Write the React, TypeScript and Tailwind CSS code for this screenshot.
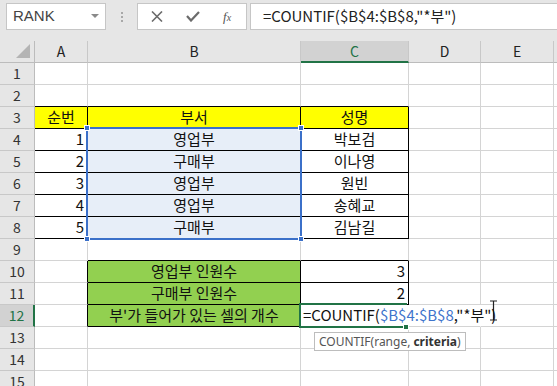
import React from "react";

type Cell = {
  t?: React.ReactNode;
  align?: "l" | "c" | "r";
  bg?: string;
  br?: boolean;
  bb?: boolean;
  noR?: boolean;
};

const colW = ["w-[53px]", "w-[213px]", "w-[108px]", "w-[72px]", "w-[73px]", "w-[40px]"];
const colNames = ["A", "B", "C", "D", "E", ""];

const font = "font-['Noto_Sans_CJK_KR',sans-serif]";

// rows 1..15, each has cells A..F
function buildRows(): Cell[][] {
  const rows: Cell[][] = [];
  for (let i = 0; i < 15; i++) rows.push([{}, {}, {}, {}, {}, {}]);
  // row 2 bottom line
  for (let c = 0; c < 3; c++) rows[1][c] = { bb: true };
  rows[2] = [
    { t: "순번", align: "c", bg: "bg-[#ffff00]", br: true, bb: true },
    { t: "부서", align: "c", bg: "bg-[#ffff00]", br: true, bb: true },
    { t: "성명", align: "c", bg: "bg-[#ffff00]", br: true, bb: true },
    {},
    {},
    {},
  ];
  const data = [
    ["1", "영업부", "박보검"],
    ["2", "구매부", "이나영"],
    ["3", "영업부", "원빈"],
    ["4", "영업부", "송혜교"],
    ["5", "구매부", "김남길"],
  ];
  data.forEach((d, i) => {
    rows[3 + i] = [
      { t: d[0], align: "r", br: true, bb: true },
      { t: d[1], align: "c", bg: "bg-[#e7eef8]", br: true, bb: true },
      { t: d[2], align: "c", br: true, bb: true },
      {},
      {},
      {},
    ];
  });
  rows[8] = [{}, { bb: true }, { bb: true }, {}, {}, {}];
  rows[9] = [
    { br: true },
    { t: "영업부 인원수", align: "c", bg: "bg-[#92d050]", br: true, bb: true },
    { t: "3", align: "r", br: true, bb: true },
    {},
    {},
    {},
  ];
  rows[10] = [
    { br: true },
    { t: "구매부 인원수", align: "c", bg: "bg-[#92d050]", br: true, bb: true },
    { t: "2", align: "r", br: true, bb: true },
    {},
    {},
    {},
  ];
  rows[11] = [
    { br: true },
    { t: "부'가 들어가 있는 셀의 개수", align: "c", bg: "bg-[#92d050]", br: true, bb: true },
    {
      t: (
        <span className="relative z-10 whitespace-nowrap pl-[2px] text-[#111]">
          =COUNTIF(<span className="text-[#3f74cc]">$B$4:$B$8</span>,"*부")
        </span>
      ),
      align: "l",
      noR: true,
    },
    { noR: true },
    {},
    {},
  ];
  return rows;
}

function GridCell({ c, w }: { c: Cell; w: string }) {
  const right = c.noR ? "border-r-white" : c.br ? "border-r-black" : "border-r-[#d4d4d4]";
  const bottom = c.bb ? "border-b-black" : "border-b-[#d4d4d4]";
  const just =
    c.align === "c" ? "justify-center" : c.align === "r" ? "justify-end pr-[3px]" : "justify-start";
  return (
    <div
      className={`${w} shrink-0 h-full border-r border-b ${right} ${bottom} ${c.bg ?? "bg-white"} flex items-center ${just} text-[15px] text-[#111] overflow-visible`}
    >
      {c.t}
    </div>
  );
}

function TopBar() {
  return (
    <div className="h-[41px] bg-[#e6e6e6] flex items-start pt-[3px]">
      <div className="ml-[6px] w-[100px] h-[27px] bg-white border border-[#c6c6c6] flex items-center justify-between pl-[6px] pr-[6px]">
        <span className="font-['Liberation_Sans',sans-serif] text-[15px] text-[#444]">RANK</span>
        <svg width="8" height="5" viewBox="0 0 8 5">
          <path d="M0 0 H8 L4 4 Z" fill="#8a8a8a" />
        </svg>
      </div>
      <div className="w-[31px] h-[27px] flex flex-col items-center justify-center gap-[2px]">
        <span className="w-[2px] h-[2px] bg-[#a8a8a8]" />
        <span className="w-[2px] h-[2px] bg-[#a8a8a8]" />
        <span className="w-[2px] h-[2px] bg-[#a8a8a8]" />
      </div>
      <div className="w-[110px] h-[27px] bg-white border border-[#c6c6c6] flex items-center">
        <svg className="ml-[13px]" width="12" height="11" viewBox="0 0 12 11">
          <path d="M1 0.5 L11 10.5 M11 0.5 L1 10.5" stroke="#6b6b6b" strokeWidth="1.6" />
        </svg>
        <svg className="ml-[23px]" width="14" height="11" viewBox="0 0 14 11">
          <path d="M1 5 L5 9.5 L13 1" stroke="#6b6b6b" strokeWidth="2.2" fill="none" />
        </svg>
        <span className="ml-[23px] font-['Liberation_Serif',serif] italic text-[13px] text-[#555] leading-none">
          f<span className="text-[10px]">x</span>
        </span>
      </div>
      <div className="ml-[3px] flex-1 h-[27px] bg-white border border-r-0 border-[#c6c6c6] flex items-center pl-[12px]">
        <span className={`${font} text-[15px] text-[#222] whitespace-nowrap`}>=COUNTIF($B$4:$B$8,"*부")</span>
      </div>
    </div>
  );
}

export default function App() {
  const rows = buildRows();
  return (
    <div className={`relative w-[557px] h-[386px] overflow-hidden bg-white ${font}`}>
      <TopBar />
      {/* column headers */}
      <div className="flex h-[22px] bg-[#e6e6e6]">
        <div className="w-[35px] shrink-0 h-full border-r border-b border-[#bcbcbc] relative">
          <svg className="absolute left-[16px] top-[3px]" width="14" height="14" viewBox="0 0 14 14">
            <path d="M14 0 V14 H0 Z" fill="#b4b4b4" />
          </svg>
        </div>
        {colNames.map((n, i) => (
          <div
            key={i}
            className={`${colW[i]} shrink-0 h-full flex items-center justify-center text-[14px] border-r border-[#c8c8c8] ${
              n === "C"
                ? "bg-[#d2d2d2] text-[#217346] border-b-2 border-b-[#217346]"
                : "text-[#222] border-b border-b-[#bcbcbc]"
            }`}
          >
            {n}
          </div>
        ))}
      </div>
      {rows.map((r, ri) => (
        <div key={ri} className="flex h-[22px]">
          <div
            className={`w-[35px] shrink-0 h-full flex items-center justify-center text-[14px] border-b border-b-[#c8c8c8] ${
              ri === 11
                ? "bg-[#d2d2d2] text-[#217346] border-r-2 border-r-[#217346]"
                : "bg-[#e6e6e6] text-[#333] border-r border-r-[#bcbcbc]"
            }`}
          >
            {ri + 1}
          </div>
          {r.map((c, ci) => (
            <GridCell key={ci} c={c} w={colW[ci]} />
          ))}
        </div>
      ))}

      {/* range highlight B4:B8 */}
      <div className="absolute left-[86px] top-[127px] w-[216px] h-[113px] border-2 border-[#3b70c9] pointer-events-none" />
      <div className="absolute left-[84px] top-[125px] w-[6px] h-[6px] bg-[#3b70c9] border border-white" />
      <div className="absolute left-[298px] top-[125px] w-[6px] h-[6px] bg-[#3b70c9] border border-white" />
      <div className="absolute left-[84px] top-[236px] w-[6px] h-[6px] bg-[#3b70c9] border border-white" />
      <div className="absolute left-[298px] top-[236px] w-[6px] h-[6px] bg-[#3b70c9] border border-white" />

      {/* active cell C12 */}
      <div className="absolute left-[299px] top-[303px] w-[108px] h-[25px] border-t-2 border-l-2 border-b-2 border-[#217346] pointer-events-none" />
      <div className="absolute left-[403px] top-[324px] w-[6px] h-[6px] bg-[#217346] border border-white" />

      {/* function tooltip */}
      <div className="absolute left-[314px] top-[332px] h-[19px] px-[4px] bg-white border border-[#bdbdbd] flex items-center text-[12px] text-[#555] font-['Noto_Sans',sans-serif] whitespace-nowrap">
        COUNTIF(range, <span className="font-bold text-[#333] ml-[3px]">criteria</span>)
      </div>

      {/* text cursor */}
      <svg className="absolute left-[489px] top-[300px]" width="9" height="21" viewBox="0 0 9 21">
        <path d="M1 1 H8 M4.5 1 V20 M1 20 H8" stroke="#222" strokeWidth="1.2" fill="none" />
      </svg>
    </div>
  );
}
